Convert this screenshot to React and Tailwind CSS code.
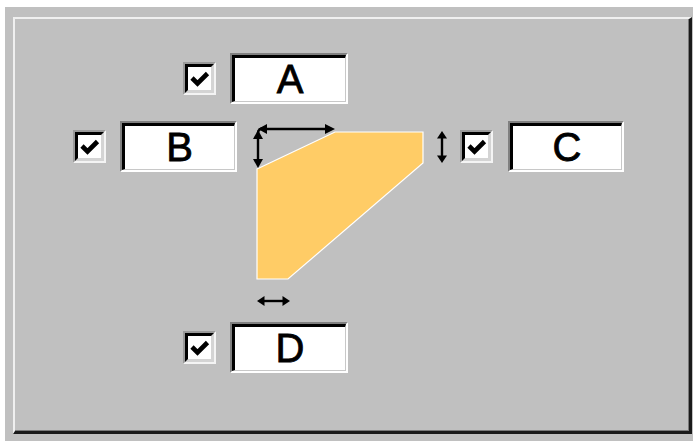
import React from "react";

function Check() {
  return (
    <div className="w-[33px] h-[33px] border-2 border-t-[#9a9a9a] border-l-[#9a9a9a] border-b-[#f4f4f4] border-r-[#f4f4f4] shrink-0">
      <div className="w-full h-full border-[3px] border-t-black border-l-black border-b-[#d4d4d4] border-r-[#d4d4d4] bg-white flex items-center justify-center">
        <svg width="22" height="22" viewBox="0 0 22 22">
          <path d="M3 10 L8.5 15.5 L18.5 5.5" fill="none" stroke="black" strokeWidth="4.6" strokeLinejoin="miter" strokeLinecap="butt" />
        </svg>
      </div>
    </div>
  );
}

function Field({ label, w }) {
  return (
    <div className={`${w} h-[51px] border-2 border-t-[#808080] border-l-[#808080] border-b-white border-r-white shrink-0`}>
      <div className="w-full h-full border-t-[3px] border-l-[3px] border-b border-r border-t-black border-l-black border-b-[#c8c8c8] border-r-[#c8c8c8] bg-white flex items-center justify-center">
        <span className="text-[40px] leading-none text-black font-['Liberation_Sans',Arial,sans-serif] [-webkit-text-stroke:0.8px_black] -mt-[2px]">{label}</span>
      </div>
    </div>
  );
}

function Drawing() {
  const head = "black";
  return (
    <svg width="216" height="192" viewBox="0 0 216 192" className="shrink-0">
      <polygon
        points="17,48 95,11 183,11 183,42 48,158 17,158"
        fill="#ffcc66"
        stroke="#ffffff"
        strokeWidth="1.2"
      />
      {/* horizontal arrow top */}
      <line x1="24" y1="8" x2="88" y2="8" stroke={head} strokeWidth="2.4" />
      <polygon points="18,8 27,3 27,13" fill={head} />
      <polygon points="95,8 85,3 85,13" fill={head} />
      {/* vertical arrow left */}
      <line x1="18" y1="14" x2="18" y2="40" stroke={head} strokeWidth="2.4" />
      <polygon points="18,9 13,18 23,18" fill={head} />
      <polygon points="18,47 13,38 23,38" fill={head} />
      <path d="M18 12 Q18 7 25 7" fill="none" stroke={head} strokeWidth="2.4" />
      {/* vertical arrow right */}
      <line x1="202" y1="14" x2="202" y2="38" stroke={head} strokeWidth="2.4" />
      <polygon points="202,10 197,17.5 207,17.5" fill={head} />
      <polygon points="202,42 197,34.5 207,34.5" fill={head} />
      {/* horizontal arrow bottom */}
      <line x1="22" y1="180" x2="45" y2="180" stroke={head} strokeWidth="2.4" />
      <polygon points="17,180 24.5,175 24.5,185" fill={head} />
      <polygon points="50,180 42.5,175 42.5,185" fill={head} />
    </svg>
  );
}

export default function App() {
  return (
    <div className="w-[693px] h-[441px] bg-white pl-[5px] pt-[7px] overflow-hidden">
      <div className="w-[688px] h-[434px] bg-[#c0c0c0] pl-[8px] pt-[10px]">
        <div className="w-[679px] h-[417px] border-t-2 border-l-2 border-b-[3px] border-r-[3px] border-t-[#f0f0f0] border-l-[#f0f0f0] border-b-[#1a1a1a] border-r-[#1a1a1a] shadow-[inset_-1px_-1px_0_#7a7a7a] flex flex-col pt-[34px]">
          <div className="flex items-center gap-[14px] ml-[168px]">
            <Check />
            <Field label="A" w="w-[118px]" />
          </div>
          <div className="flex items-start ml-[58px] mt-[17px]">
            <div className="flex items-center gap-[14px]">
              <Check />
              <Field label="B" w="w-[117px]" />
            </div>
            <div className="ml-[3px]">
              <Drawing />
            </div>
            <div className="flex items-center gap-[15px] ml-[4px]">
              <Check />
              <Field label="C" w="w-[116px]" />
            </div>
          </div>
          <div className="flex items-center gap-[14px] ml-[168px] mt-[9px]">
            <Check />
            <Field label="D" w="w-[118px]" />
          </div>
        </div>
      </div>
    </div>
  );
}
